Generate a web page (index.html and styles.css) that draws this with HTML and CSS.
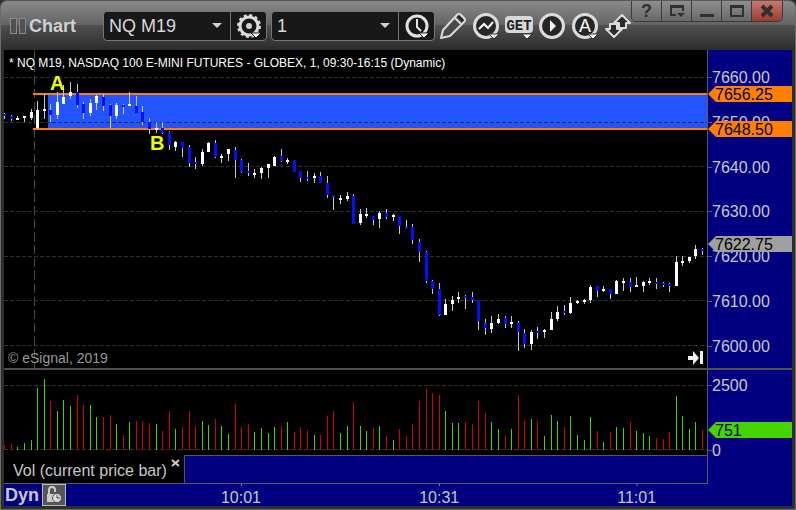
FILE: index.html
```html
<!DOCTYPE html>
<html lang="en">
<head>
    <meta charset="UTF-8">
    <meta name="viewport" content="width=device-width, initial-scale=1.0">
    <title>Chart - NQ M19</title>
    <link rel="stylesheet" href="styles.css">
</head>
<body>
    <div class="window">
        <header class="toolbar">
            <span class="grip"></span>
            <span class="grip"></span>
            <h1>Chart</h1>
            <div class="combo combo-symbol">
                <select aria-label="Symbol">
                    <option>NQ M19</option>
                </select>
                <button type="button" aria-label="Symbol settings">
                    <svg width="26" height="26" viewBox="0 0 26 26">
                        <circle cx="13" cy="13" r="9" fill="none" stroke="#dcdcdc" stroke-width="3"/>
                        <circle cx="13" cy="13" r="11" fill="none" stroke="#dcdcdc" stroke-width="2" stroke-dasharray="3 2.76"/>
                        <circle cx="13" cy="13" r="3" fill="#d0d0d0"/>
                        <path d="M15 20h10l-5 5z" fill="#fff" stroke="#181818"/>
                    </svg>
                </button>
            </div>
            <div class="combo combo-interval">
                <select aria-label="Interval">
                    <option>1</option>
                </select>
                <button type="button" aria-label="Time template">
                    <svg width="26" height="26" viewBox="0 0 26 26">
                        <circle cx="13" cy="13" r="10" fill="none" stroke="#e0e0e0" stroke-width="3"/>
                        <path d="M13 6v8l4 4" fill="none" stroke="#e4e4e4" stroke-width="2"/>
                        <path d="M15 20h10l-5 5z" fill="#fff" stroke="#181818"/>
                    </svg>
                </button>
            </div>
            <div class="tools">
                <button type="button" aria-label="Draw">
                    <svg width="28" height="28" viewBox="0 0 28 28">
                        <path d="M2 26l2-8L18 3q2-2 4 0l3 3q2 2 0 4L11 24z" fill="#484848" stroke="#dcdcdc" stroke-width="2" stroke-linejoin="round"/>
                        <path d="M16 6l6 6" fill="none" stroke="#dcdcdc" stroke-width="2"/>
                        <path d="M19 4l5 5" fill="none" stroke="#222" stroke-width="2"/>
                    </svg>
                </button>
                <button type="button" aria-label="Studies">
                    <svg width="28" height="28" viewBox="0 0 28 28">
                        <circle cx="14" cy="14" r="11.5" fill="#262626" stroke="#dcdcdc" stroke-width="3"/>
                        <path d="M7 17l5-5 4 4 5-6" fill="none" stroke="#fff" stroke-width="2"/>
                        <path d="M17 22h10l-5 5z" fill="#fff" stroke="#333"/>
                    </svg>
                </button>
                <button type="button" aria-label="Get">
                    <svg width="28" height="28" viewBox="0 0 28 28">
                        <rect x="0" y="4" width="28" height="17" rx="4" fill="#d8d8d8"/>
                        <text x="14" y="18" class="get-label">GET</text>
                        <path d="M17 22h10l-5 5z" fill="#fff" stroke="#333"/>
                    </svg>
                </button>
                <button type="button" aria-label="Play">
                    <svg width="28" height="28" viewBox="0 0 28 28">
                        <circle cx="14" cy="14" r="11.5" fill="#262626" stroke="#dcdcdc" stroke-width="3"/>
                        <path d="M12 8v12l6-6z" fill="#f4f4f4"/>
                    </svg>
                </button>
                <button type="button" aria-label="Alerts">
                    <svg width="28" height="28" viewBox="0 0 28 28">
                        <circle cx="14" cy="14" r="11.5" fill="#262626" stroke="#dcdcdc" stroke-width="3"/>
                        <text x="14" y="20" class="alert-label">A</text>
                        <path d="M17 22h10l-5 5z" fill="#fff" stroke="#333"/>
                    </svg>
                </button>
                <button type="button" aria-label="Scale">
                    <svg width="28" height="28" viewBox="0 0 28 28">
                        <path d="M6 12h7v5h5l-8 8-8-8h4z" fill="#2a2a2a" stroke="#dcdcdc" stroke-width="2" stroke-linejoin="round"/>
                        <path d="M18 3l8 8h-4v5h-7v-5h-5z" fill="#2a2a2a" stroke="#dcdcdc" stroke-width="2" stroke-linejoin="round"/>
                    </svg>
                </button>
            </div>
            <div class="window-buttons">
                <button type="button" aria-label="Help">?</button>
                <button type="button" aria-label="Window menu">
                    <svg width="18" height="14" viewBox="0 0 18 14">
                        <path d="M8 11H3V2h12v5M3 3h12" fill="none" stroke="#303030" stroke-width="2"/>
                        <path d="M9 9h8l-4 4z" fill="#303030"/>
                    </svg>
                </button>
                <button type="button" aria-label="Minimize">
                    <svg width="18" height="14" viewBox="0 0 18 14"><path d="M2 10h14v3H2z" fill="#303030"/></svg>
                </button>
                <button type="button" aria-label="Maximize">
                    <svg width="18" height="14" viewBox="0 0 18 14"><path d="M3 2h12v10H3zM3 3h12" fill="none" stroke="#303030" stroke-width="2"/></svg>
                </button>
                <button type="button" class="close" aria-label="Close">
                    <svg width="18" height="14" viewBox="0 0 18 14"><path d="M4 2l10 10M14 2L4 12" stroke="#303030" stroke-width="4"/></svg>
                </button>
            </div>
        </header>

        <main class="chart">
            <section class="pane price-pane">
                <div class="plot">
                    <svg id="price" class="drawing" viewBox="4 50 703 318" preserveAspectRatio="none" shape-rendering="crispEdges"></svg>
                    <h2>* NQ M19, NASDAQ 100 E-MINI FUTURES - GLOBEX, 1, 09:30-16:15 (Dynamic)</h2>
                    <span class="mark mark-a">A</span>
                    <span class="mark mark-b">B</span>
                    <p class="copyright">© eSignal, 2019</p>
                    <button type="button" class="go-last" aria-label="Go to last bar">
                        <svg width="16" height="14" viewBox="0 0 16 14">
                            <path d="M0 5h5V0l6 7-6 7V9H0zM12 0h3v13h-3z" fill="#eee"/>
                        </svg>
                    </button>
                </div>
                <div class="axis">
                    <span class="tick t7660">7660.00</span>
                    <span class="tick t7650">7650.00</span>
                    <span class="tick t7640">7640.00</span>
                    <span class="tick t7630">7630.00</span>
                    <span class="tick t7620">7620.00</span>
                    <span class="tick t7610">7610.00</span>
                    <span class="tick t7600">7600.00</span>
                    <span class="flag flag-high">7656.25</span>
                    <span class="flag flag-low">7648.50</span>
                    <span class="flag flag-last">7622.75</span>
                </div>
            </section>

            <section class="pane volume-pane">
                <div class="plot">
                    <svg id="volume" class="drawing" viewBox="4 370 703 85" preserveAspectRatio="none" shape-rendering="crispEdges"></svg>
                </div>
                <div class="axis">
                    <span class="tick v2500">2500</span>
                    <span class="tick v0">0</span>
                    <span class="flag flag-volume">751</span>
                </div>
            </section>

            <div class="tabs">
                <div class="tab-strip">
                    <div class="tab">
                        <span>Vol (current price bar)</span>
                        <button type="button" aria-label="Close study">
                            <svg width="9" height="8" viewBox="0 0 9 8"><path d="M1 1l7 6M8 1L1 7" stroke="#ccc" stroke-width="2"/></svg>
                        </button>
                    </div>
                </div>
            </div>

            <footer class="time-axis">
                <strong>Dyn</strong>
                <button type="button" class="lock" aria-label="Lock time axis">
                    <svg width="18" height="18" viewBox="0 0 18 18">
                        <path d="M4 8V4q0-3 3-3t3 3v2" fill="none" stroke="#ccc" stroke-width="2"/>
                        <path d="M2 8h9v8H2z" fill="#ccc"/>
                        <circle cx="12" cy="12" r="4.5" fill="#ddd" stroke="#555"/>
                        <path d="M12 9v3h3" fill="none" stroke="#444"/>
                    </svg>
                </button>
                <div class="times">
                    <span class="time time-1">10:01</span>
                    <span class="time time-2">10:31</span>
                    <span class="time time-3">11:01</span>
                </div>
            </footer>
        </main>
    </div>
    <script src="chart.js"></script>
</body>
</html>
```

FILE: styles.css
```css
* {
    box-sizing: border-box;
}
body {
    margin: 0;
    background: #2e2e2e;
    font-family: "Liberation Sans", Arial, sans-serif;
    font-size: 16px;
    color: #c8c8c8;
}
h1, h2, p {
    margin: 0;
}
button {
    padding: 0;
    border: 0;
    background: none;
    font: inherit;
    color: inherit;
}
svg {
    display: block;
}
.window {
    display: flex;
    flex-direction: column;
    min-height: 100vh;
    border: 1px solid #6c6c6c;
    border-top-color: #585858;
    border-radius: 7px 7px 0 0;
    background: #2e2e2e;
}

/* toolbar */
.toolbar {
    display: flex;
    align-items: center;
    height: 49px;
    padding-left: 9px;
    border-radius: 6px 6px 0 0;
    background: linear-gradient(#8a8a8a 0, #636363 24px, #505050 24px, #2c2c2c 100%);
}
.toolbar > * {
    flex-shrink: 0;
}
.grip {
    width: 7px;
    height: 16px;
    margin-right: 2px;
    border: 1px solid #8a8a8a;
    background: #505050;
}
.toolbar h1 {
    width: 74px;
    margin-left: 1px;
    font-size: 18px;
    line-height: 24px;
    color: #d0d0d0;
}
.combo {
    display: flex;
    height: 30px;
    margin-right: 4px;
    border: 1px solid #777;
    border-radius: 4px;
    background: #181818;
}
.combo select {
    width: 126px;
    padding: 0 5px;
    border: 0;
    appearance: none;
    background: url("data:image/svg+xml,%3Csvg xmlns='http://www.w3.org/2000/svg' width='10' height='5'%3E%3Cpath d='M0 0h10L5 5z' fill='%23d0d0d0'/%3E%3C/svg%3E") no-repeat right 8px center;
    font: 18px "Liberation Sans", Arial, sans-serif;
    color: #d8d8d8;
}
.combo button {
    display: flex;
    align-items: center;
    justify-content: center;
    width: 36px;
    border-left: 1px solid #777;
}
.tools {
    display: flex;
    gap: 5px;
    margin-right: -4px;
}
.get-label {
    font: bold 14px "Liberation Mono", monospace;
    text-anchor: middle;
    fill: #222;
}
.alert-label {
    font: 18px "Liberation Sans", Arial, sans-serif;
    text-anchor: middle;
    fill: #fff;
}
.window-buttons {
    display: flex;
    align-self: flex-start;
    margin-left: auto;
    margin-right: 12px;
    border: 1px solid #3a3a3a;
    border-top: 0;
    border-radius: 0 0 5px 5px;
}
.window-buttons button {
    display: flex;
    align-items: center;
    justify-content: center;
    width: 30px;
    height: 20px;
    border-right: 1px solid #3a3a3a;
    background: linear-gradient(#8e8e8e, #686868);
    font-size: 18px;
    font-weight: bold;
    color: #303030;
}
.window-buttons button:first-child {
    border-radius: 0 0 0 4px;
}
.window-buttons button.close {
    border-right: 0;
    border-radius: 0 0 4px 0;
    background: linear-gradient(#c87870, #9c3c30);
}

/* chart */
.chart {
    flex: 1;
    display: flex;
    flex-direction: column;
    margin: 0 3px 3px;
    background: #000080;
}
.pane {
    display: flex;
}
.plot {
    flex: 1;
    position: relative;
    background: #000;
    border-right: 1px solid #585858;
}
.price-pane {
    flex: 1;
    min-height: 320px;
    border-bottom: 2px solid #505050;
}
.volume-pane {
    height: 85px;
}
.drawing {
    position: absolute;
    inset: 0;
    width: 100%;
    height: 100%;
}
.axis {
    position: relative;
    width: 84px;
    line-height: 18px;
}
.plot h2 {
    position: relative;
    padding: 5px;
    font-size: 12px;
    font-weight: normal;
    line-height: 16px;
    color: #fff;
}
.mark {
    position: absolute;
    font-size: 20px;
    font-weight: bold;
    line-height: 20px;
    color: #e8ff00;
}
.mark-a {
    left: 46px;
    top: 23px;
}
.mark-b {
    left: 146px;
    top: 83px;
}
.copyright {
    position: absolute;
    left: 4px;
    bottom: 1px;
    font-size: 14px;
    line-height: 18px;
    color: #999;
}
.go-last {
    position: absolute;
    right: 3px;
    bottom: 3px;
}

/* axis labels, placed by value */
.tick {
    position: absolute;
    left: 4px;
}
.tick::before {
    content: "";
    position: absolute;
    left: -4px;
    top: 8px;
    width: 4px;
    height: 1px;
    background: #585858;
}
.flag {
    position: absolute;
    left: 0;
    right: 0;
    height: 16px;
    padding-left: 7px;
    line-height: 17px;
    color: #000;
    clip-path: polygon(0 50%, 8px 0, 100% 0, 100% 100%, 8px 100%);
}
.t7660 { top: 19px; }
.t7650 { top: 64px; }
.t7640 { top: 109px; }
.t7630 { top: 153px; }
.t7620 { top: 198px; }
.t7610 { top: 243px; }
.t7600 { top: 288px; }
.flag-high {
    top: 36px;
    background: #ff8000;
}
.flag-low {
    top: 71px;
    background: #ff8000;
}
.flag-last {
    top: 186px;
    background: #a0a0a0;
}
.v2500 { top: 7px; }
.v0 { top: 72px; }
.flag-volume {
    top: 52px;
    background: #44d400;
}

/* study tab */
.tabs {
    height: 29px;
    padding-right: 84px;
}
.tab-strip {
    display: flex;
    height: 29px;
    border: solid #585858;
    border-width: 1px 1px 1px 0;
}
.tab {
    display: flex;
    align-items: flex-start;
    gap: 4px;
    padding: 0 4px 0 9px;
    border-right: 1px solid #585858;
    margin-top: -1px;
    background: #000;
    line-height: 31px;
}
.tab button {
    padding-top: 4px;
}

/* time axis */
.time-axis {
    display: flex;
    height: 22px;
}
.time-axis strong {
    width: 38px;
    padding-left: 1px;
    font-size: 18px;
    line-height: 22px;
}
.lock {
    display: flex;
    align-items: center;
    justify-content: center;
    width: 24px;
    height: 22px;
    border: 1px solid #bbb;
    background: #555;
}
.times {
    position: relative;
    flex: 1;
}
.time {
    position: absolute;
    top: 5px;
    line-height: 18px;
    transform: translateX(-50%);
}
.time::before {
    content: "";
    position: absolute;
    left: 50%;
    top: -5px;
    width: 1px;
    height: 2px;
    background: #888;
}
.time-1 { left: 24.1%; }
.time-2 { left: 51.4%; }
.time-3 { left: 78.6%; }
```

FILE: chart.js
```js
// one row per bar: high, body top, body bottom, low, rising (1) or falling (0)
const bars = [
    [113,114,116,119,0], [115,116,119,121,0], [116,118,120,120,1], [116,116,118,122,1], [109,112,118,120,1],
    [101,110,128,129,1], [94,109,111,119,1], [104,110,115,122,0], [92,102,115,119,1], [85,97,104,104,1],
    [82,92,96,99,1], [84,92,105,108,0], [102,104,113,119,0], [99,103,113,116,1], [95,96,103,110,1],
    [94,97,106,111,0], [104,105,116,128,0], [103,105,116,119,1], [104,105,107,114,0], [92,104,106,106,1],
    [96,106,113,113,0], [106,112,122,125,0], [118,122,129,134,0], [122,128,130,133,1], [122,128,133,134,0],
    [131,132,145,150,0], [141,142,147,151,1], [142,142,148,157,0], [145,147,163,167,0], [157,162,164,169,0],
    [149,152,164,166,1], [142,143,152,152,1], [140,143,157,158,0], [154,156,158,163,1], [149,149,154,161,1],
    [147,150,160,178,0], [159,160,172,173,0], [163,171,173,176,0], [169,173,175,178,1], [167,168,173,179,1],
    [164,164,168,178,1], [156,157,166,166,1], [149,156,161,162,0], [158,160,162,164,1], [160,160,172,172,0],
    [171,171,178,182,0], [171,177,179,181,0], [173,176,178,183,1], [172,176,183,183,0], [176,183,195,198,0],
    [195,195,197,210,0], [195,198,200,204,1], [192,196,199,201,1], [194,196,224,224,0], [209,214,223,225,1],
    [208,214,216,218,1], [216,216,220,225,0], [211,213,219,228,1], [209,213,217,219,0], [214,215,217,221,1],
    [216,216,226,234,0], [220,227,229,229,0], [224,227,240,244,0], [239,242,252,262,0], [251,252,281,283,0],
    [280,281,289,294,0], [283,289,315,316,0], [299,304,315,315,1], [296,300,304,311,1], [292,297,299,303,1],
    [295,296,298,309,0], [292,297,300,303,0], [300,300,321,330,0], [319,323,328,335,0], [316,323,329,333,1],
    [314,319,323,324,1], [316,318,324,328,0], [316,322,324,328,1], [321,323,332,351,0], [329,333,344,348,0],
    [330,332,344,350,1], [327,331,333,339,0], [329,330,332,338,1], [312,319,330,330,1], [306,312,319,321,1],
    [305,311,313,315,0], [297,303,313,314,1], [300,301,303,304,1], [299,300,302,304,1], [285,287,300,303,1],
    [286,286,291,297,0], [286,289,291,292,1], [289,289,294,299,0], [280,281,294,294,1], [278,281,283,291,1],
    [278,282,287,292,0], [277,285,287,287,1], [281,282,286,292,1], [278,281,283,285,1], [278,282,284,289,0],
    [282,283,285,287,0], [283,284,286,292,0], [256,262,286,286,1], [256,261,263,266,1], [257,257,261,263,1],
    [245,249,256,259,1], [248,249,251,255,0]
];

// top of each volume bar, negative when the bar is red
const volumes = [
    -445, -444, 447, 443, 440, 388, 379, -401, 411, 400, 406, -395, -405, 405, 417, -417, -415, 424, -435, 422,
    -421, -421, -423, 424, -431, -411, 429, -427, -411, -426, 421, 425, -419, 426, 434, -404, -427, -424, 432, 428,
    433, 427, -426, 422, -432, -427, -430, 435, -435, -416, -411, 433, 426, -402, 426, 431, -428, 426, -436, 440,
    -429, -436, -424, -401, -389, -393, -395, 411, 423, 423, -422, -424, -401, -413, 422, 429, -436, 429, -395, -421,
    419, -421, 436, 415, 421, -427, 416, 435, 440, 417, -431, 442, -432, 427, 428, -422, 431, 433, 436, -438,
    -439, -432, 396, 416, 429, 422, -430
];

const barX = i => Math.floor(4.7 + 6.583 * i);
const rect = (x, y, w, h, fill) => `<rect x="${x}" y="${y}" width="${w}" height="${h}" fill="${fill}"/>`;
const grid = y => `<path d="M4 ${y}.5H707" stroke="#303030" stroke-dasharray="4 2"/>`;

let price = rect(48, 94, 659, 35, '#2255ff');
price += [77, 122, 166, 211, 256, 300, 345].map(grid).join('');
price += '<path d="M34.5 50V368" stroke="#484848" stroke-dasharray="9 4"/>';
price += rect(33, 93, 674, 2, '#ff8000') + rect(33, 128, 674, 2, '#ff8000');
bars.forEach(([high, top, bottom, low, up], i) => {
    price += rect(barX(i), high, 1, low - high, '#c8c8c8');
    price += rect(barX(i) - 1, top, 3, bottom - top, up ? '#fff' : '#0010ff');
});
document.getElementById('price').innerHTML = price;

let volume = grid(385) + grid(449);
volumes.forEach((v, i) => {
    volume += rect(barX(i), Math.abs(v), 1, 450 - Math.abs(v), v > 0 ? '#44d400' : '#d40000');
});
document.getElementById('volume').innerHTML = volume;
```
